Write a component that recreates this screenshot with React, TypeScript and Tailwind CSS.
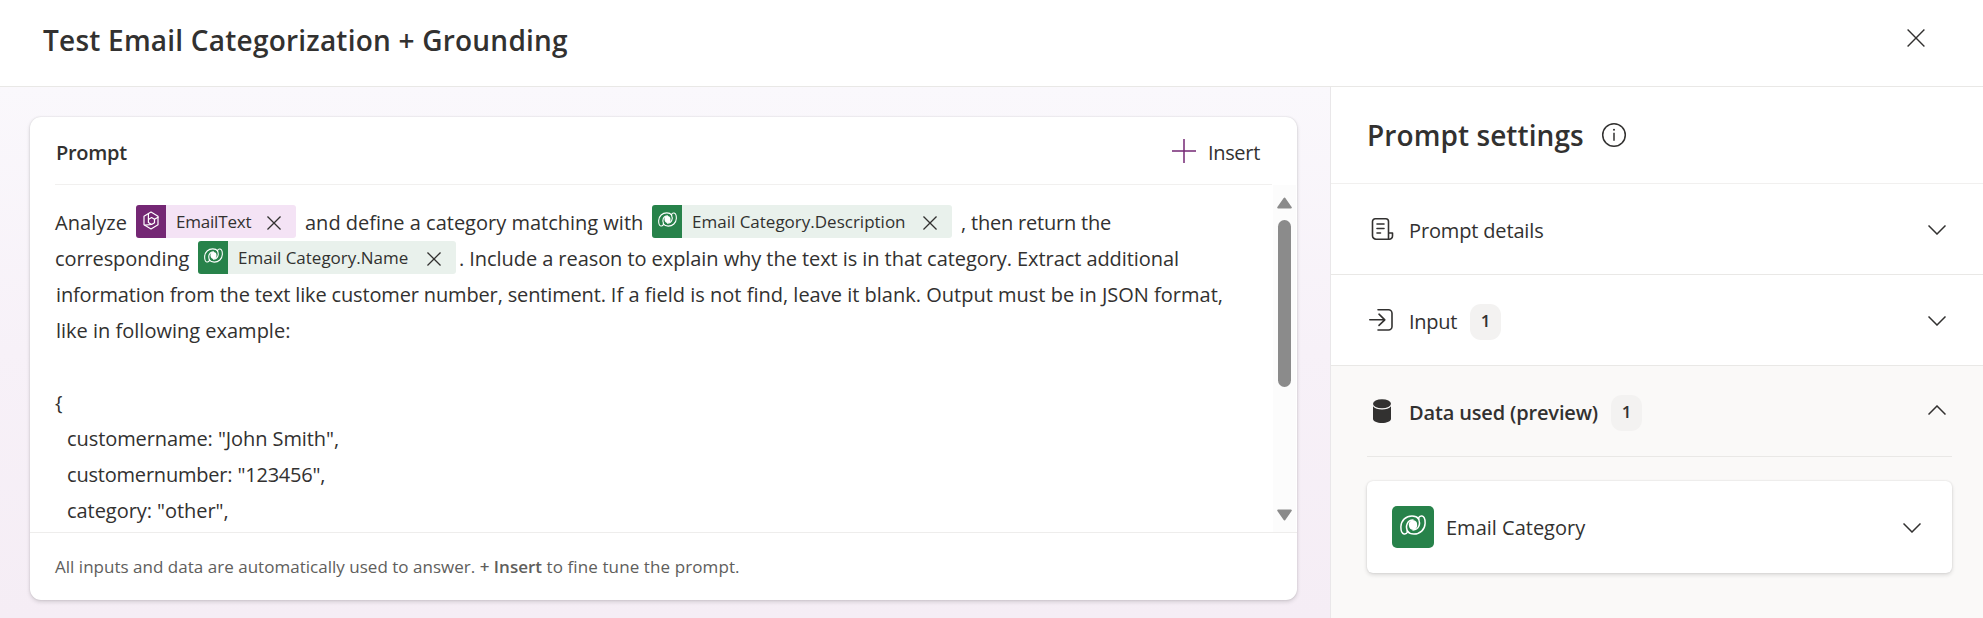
import type { ReactNode } from "react";

function Cross({ size, className = "" }: { size: number; className?: string }) {
  return (
    <svg width={size} height={size} viewBox="0 0 18 18" className={`shrink-0 ${className}`} fill="none" stroke="#323130" strokeWidth={size > 16 ? 1.4 : 1.7}>
      <path d="M.6.6l16.8 16.8M17.4.6L.6 17.4" />
    </svg>
  );
}

function Chevron({ up = false, className = "" }: { up?: boolean; className?: string }) {
  return (
    <svg width="18" height="10" viewBox="0 0 18 10" className={`shrink-0 ${className}`} fill="none" stroke="#323130" strokeWidth="1.5">
      <path d={up ? "M.5 9.5L9 1l8.500 8.500" : "M.5.5L9 9 17.500.5"} />
    </svg>
  );
}

function Dataverse({ width, height }: { width: number; height: number }) {
  return (
    <svg width={width} height={height} viewBox="0 0 26 20" fill="none" stroke="#fff" strokeWidth="1.5" strokeLinecap="round" strokeLinejoin="round">
      <path d="M7.800 16.500C7 18.300 5.600 19.200 4 18.900 1.500 18.400.8 15 .9 11.500 1.200 5.200 6 .9 12 .9c3 0 5.300 1 7 3" />
      <path d="M18.200 3.500C19 1.700 20.400.8 22 1.100c2.500.5 3.200 3.900 3.100 7.400C24.800 14.800 20 19.100 14 19.100c-3 0-5.300-1-7-3" />
      <path d="M7.800 16.500C4.800 11 7.500 5 13 5" />
      <path d="M18.200 3.500C21.200 9 18.500 15 13 15" />
      <path d="M8.900 10.500c-.5-3 1.400-5.300 4.100-5.300 2.600 0 4.400 1.800 4.100 4.300.5 3-1.400 5.300-4.100 5.300-2.300 0-3.900-1.600-4.100-4.300z" fill="#fff" stroke="none" />
    </svg>
  );
}

function TextVariable() {
  return (
    <svg width="18" height="19" viewBox="0 0 18 19" fill="none" stroke="#fff" strokeWidth="1.2" strokeLinejoin="round" strokeLinecap="round">
      <path d="M9 1l7 4.200v8.600L9 18l-7-4.200V5.200z" />
      <path d="M6.400 2.800v8.700l3.200 2 2.900-1.800V8.300L9.600 6.600 6.400 8.400" />
      <path d="M12.500 8.300L16 6.200M9.600 13.500L3 14.200" />
    </svg>
  );
}

function Token({ kind, label, className }: { kind: "text" | "data"; label: string; className: string }) {
  const text = kind === "text";
  return (
    <span className={`flex h-[33px] shrink-0 overflow-hidden rounded-[3px] ${text ? "bg-[#f4e3f5]" : "bg-[#e9f1ec]"} ${className}`}>
      <span className={`flex w-[30px] shrink-0 justify-center ${text ? "items-center bg-[#742774] pb-[2px]" : "bg-[#27824a] pt-[7px]"}`}>
        {text ? <TextVariable /> : <Dataverse width={19} height={15} />}
      </span>
      <span className="flex flex-1 items-center justify-between pl-[10px] pr-[15px]">
        <span className="pt-[1px] text-[17px] leading-[32px]">{label}</span>
        <Cross size={14} className="mt-[3px]" />
      </span>
    </span>
  );
}

function Line({ children }: { children?: ReactNode }) {
  return <div className="flex h-9 pl-[25px] leading-[38px]">{children}</div>;
}

function Badge({ className = "" }: { className?: string }) {
  return (
    <span className={`flex h-9 w-[31px] items-center justify-center rounded-[11px] bg-[#f3f2f1] pb-[2px] text-[17px] font-semibold ${className}`}>1</span>
  );
}

export default function App() {
  return (
    <div className="flex h-[618px] w-[1983px] flex-col overflow-hidden whitespace-pre bg-white font-['Open_Sans',sans-serif] text-[20px] text-[#323130]">
      <header className="flex h-[87px] shrink-0 items-start justify-between border-b border-[#e9e8e6] pl-[43px] pr-[58px]">
        <h1 className="pt-[20px] text-[28px] font-semibold leading-[40px] tracking-[0.22px]">Test Email Categorization + Grounding</h1>
        <Cross size={18} className="mt-[29px]" />
      </header>

      <div className="flex min-h-0 flex-1">
        <main className="w-[1330px] shrink-0 bg-linear-to-b from-[#faf8fc] via-[#f7f1f8] to-[#f5edf5] pl-[30px] pt-[30px]">
          <section className="flex h-[483px] w-[1267px] flex-col overflow-hidden rounded-[11px] bg-white shadow-[0_2px_4px_rgba(0,0,0,0.14),0_0_2px_rgba(0,0,0,0.14)]">
            <div className="ml-[25px] mr-[25px] flex h-[68px] shrink-0 items-start justify-between border-b border-[#f1f0ef]">
              <h2 className="pl-[1px] pt-[18px] font-semibold leading-[36px] tracking-[-0.3px]">Prompt</h2>
              <button className="flex pr-[12px]">
                <svg width="24" height="24" viewBox="0 0 24 24" className="mr-[12px] mt-[22px]" fill="none" stroke="#742774" strokeWidth="1.500">
                  <path d="M12 0v24M0 12h24" />
                </svg>
                <span className="pt-[18px] leading-[36px] tracking-[-0.3px]">Insert</span>
              </button>
            </div>

            <div className="flex h-[347px] shrink-0">
              <div className="w-[1243px] overflow-hidden pt-[19px]">
                <Line>
                  <span className="w-[81px] tracking-[0.05px]">Analyze</span>
                  <Token kind="text" label="EmailText" className="mt-[1px] w-[160px] tracking-[-0.2px]" />
                  <span className="ml-[9px] w-[347px]">and define a category matching with</span>
                  <Token kind="data" label="Email Category.Description" className="mt-[1px] w-[300px]" />
                  <span className="ml-[9px] tracking-[-0.2px]">, then return the</span>
                </Line>
                <Line>
                  <span className="w-[143px] tracking-[-0.1px]">corresponding</span>
                  <Token kind="data" label="Email Category.Name" className="mt-[1px] w-[258px]" />
                  <span className="ml-[3px] tracking-[-0.067px]">. Include a reason to explain why the text is in that category. Extract additional</span>
                </Line>
                <Line>
                  <span className="pl-[1px] tracking-[-0.15px]">{"information from the text like customer number, sentiment. "}</span>
                  <span className="tracking-[0.005px]">If a field is not find, leave it blank. Output must be in JSON format,</span>
                </Line>
                <Line>
                  <span className="pl-[1px]">like in following example:</span>
                </Line>
                <Line />
                <Line>{"{"}</Line>
                <Line>
                  <span className="pl-[12px] tracking-[-0.08px]">customername: "John Smith",</span>
                </Line>
                <Line>
                  <span className="pl-[12px] tracking-[-0.2px]">customernumber: "123456",</span>
                </Line>
                <Line>
                  <span className="pl-[12px] tracking-[-0.05px]">category: "other",</span>
                </Line>
              </div>
              <div className="flex w-[23px] flex-col items-center bg-[#fcfcfc] pt-[12px]">
                <svg width="15" height="12" viewBox="0 0 15 12" fill="#8b8b8b" stroke="#8b8b8b" strokeWidth="2" strokeLinejoin="round">
                  <path d="M7.500 1.500L13.800 10.500H1.200z" />
                </svg>
                <div className="mt-[11px] h-[167px] w-[13px] rounded-full bg-[#8b8b8b]" />
                <svg width="15" height="12" viewBox="0 0 15 12" className="mt-[122px]" fill="#8b8b8b" stroke="#8b8b8b" strokeWidth="2" strokeLinejoin="round">
                  <path d="M7.500 10.500L13.800 1.500H1.200z" />
                </svg>
              </div>
            </div>

            <footer className="flex-1 border-t border-[#eeedec] pl-[25px] pt-[16px] text-[17px] leading-[36px] tracking-[0.02px] text-[#605e5c]">
              All inputs and data are automatically used to answer. <span className="font-semibold">+ Insert</span> <span className="tracking-[0.1px]">to fine tune the prompt.</span>
            </footer>
          </section>
        </main>

        <aside className="flex flex-1 flex-col border-l border-[#e9e7e9]">
          <div className="flex h-[97px] shrink-0 items-start border-b border-[#f1f0ef] pl-[36px]">
            <h2 className="w-[234px] pt-[28px] text-[28px] font-semibold leading-[40px] tracking-[0.08px]">Prompt settings</h2>
            <svg width="26" height="26" viewBox="0 0 26 26" className="mt-[35px]" fill="none" stroke="#323130" strokeWidth="1.500">
              <circle cx="13" cy="13" r="11.300" />
              <path d="M13 10.800v8" />
              <circle cx="13" cy="7.800" r="1" fill="#323130" stroke="none" />
            </svg>
          </div>

          <div className="flex h-[91px] shrink-0 items-start border-b border-[#e9e8e6] pl-[38px] pr-[37px]">
            <svg width="26" height="24" viewBox="0 0 26 24" className="mr-[14px] mt-[33px]" fill="none" stroke="#323130" strokeWidth="1.600" strokeLinecap="round" strokeLinejoin="round">
              <path d="M20 22.200H7a3.500 3.500 0 0 1-3.500-3.500V4.500A2.700 2.700 0 0 1 6.200 1.800h10.600a2.700 2.700 0 0 1 2.700 2.700V16h4v3a3.200 3.200 0 0 1-3.500 3.200M19.500 16v6M8 7h7M8 11.500h7M8 16h3.500" />
            </svg>
            <span className="pt-[29px] leading-[36px] tracking-[-0.15px]">Prompt details</span>
            <Chevron className="ml-auto mt-[41px]" />
          </div>

          <div className="flex h-[91px] shrink-0 items-start border-b border-[#e9e8e6] pl-[38px] pr-[37px]">
            <svg width="26" height="24" viewBox="0 0 26 24" className="mr-[14px] mt-[33px]" fill="none" stroke="#323130" strokeWidth="1.600" strokeLinecap="round" strokeLinejoin="round">
              <path d="M9 1.800h10.500a3.500 3.500 0 0 1 3.500 3.500v13.200a3.500 3.500 0 0 1-3.500 3.500H9M.8 11.800h14.800M10 6.200l5.800 5.600-5.800 5.600" />
            </svg>
            <span className="w-[61px] pt-[29px] leading-[36px] tracking-[-0.3px]">Input</span>
            <Badge className="mt-[29px]" />
            <Chevron className="ml-auto mt-[41px]" />
          </div>

          <div className="flex-1 bg-[#faf9f8] pl-[36px] pr-[31px]">
            <div className="flex h-[91px] items-start border-b border-[#e9e8e6] pl-[6px] pr-[6px]">
              <svg width="18" height="24" viewBox="0 0 18 24" className="mr-[18px] mt-[33px]" fill="#323130">
                <ellipse cx="9" cy="4.700" rx="9" ry="4.500" />
                <path d="M0 7.200c1.700 2.100 5 3.200 9 3.200s7.300-1.100 9-3.200v12.500C18 22.200 14 24 9 24s-9-1.800-9-4.300z" />
              </svg>
              <span className="w-[202px] pt-[29px] font-semibold leading-[36px] tracking-[-0.155px]">Data used (preview)</span>
              <Badge className="mt-[29px]" />
              <Chevron up className="ml-auto mt-[39px]" />
            </div>

            <div className="mt-[24px] flex h-[92px] items-start rounded-[6px] bg-white pl-[25px] pr-[31px] shadow-[0_2px_4px_rgba(0,0,0,0.13),0_0_2px_rgba(0,0,0,0.12)]">
              <span className="mr-[12px] mt-[25px] flex h-[42px] w-[42px] justify-center rounded-[5px] bg-[#27824a] pt-[9px]">
                <Dataverse width={26} height={20} />
              </span>
              <span className="pt-[29px] leading-[36px]">Email Category</span>
              <Chevron className="ml-auto mt-[42px]" />
            </div>
          </div>
        </aside>
      </div>
    </div>
  );
}
